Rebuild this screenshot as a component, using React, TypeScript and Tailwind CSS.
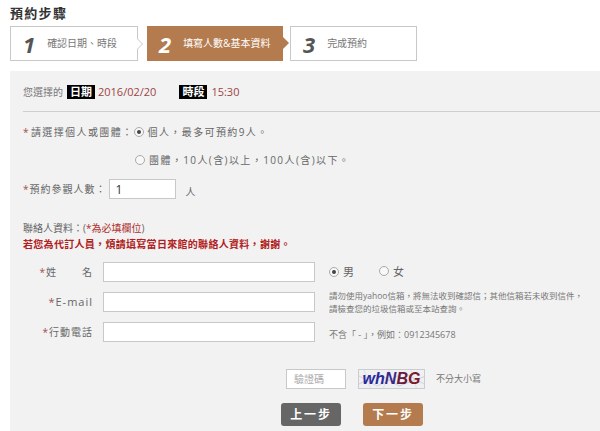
import { Fragment } from 'react'

const font = { fontFamily: '"Open Sans", "Noto Sans CJK TC", sans-serif' }

function Step({ n, label, active, arrow }: { n: string; label: string; active?: boolean; arrow?: boolean }) {
  return (
    <div
      className={`relative flex items-center h-[35px] pl-[12px] ${active ? 'bg-[#b47b4e] text-white' : 'bg-white border border-[#c8c8c8] text-[#666]'}`}
    >
      <span className={`text-[22px] font-bold italic leading-none ${active ? 'text-white' : 'text-[#555]'}`}>{n}</span>
      <span className={`ml-[12px] text-[10px] ${active ? 'text-white' : 'text-[#777]'}`}>{label}</span>
      {arrow && (
        <span
          className={`absolute right-[-6px] top-[11px] w-0 h-0 border-y-[6px] border-y-transparent border-l-[6px] ${active ? 'border-l-[#b47b4e]' : 'border-l-[#c8c8c8]'}`}
        />
      )}
      {arrow && !active && (
        <span className="absolute right-[-5px] top-[12px] w-0 h-0 border-y-[5px] border-y-transparent border-l-[5px] border-l-white" />
      )}
    </div>
  )
}

function Radio({ checked }: { checked?: boolean }) {
  return (
    <span className="inline-flex items-center justify-center w-[10px] h-[10px] rounded-full border border-[#aaa] bg-[#f8f8f8]">
      {checked && <span className="w-[4px] h-[4px] rounded-full bg-[#444]" />}
    </span>
  )
}

export default function App() {
  return (
    <div className="w-[600px] h-[431px] bg-white overflow-hidden text-[#666]" style={font}>
      <div className="pl-[10px] pt-[5px]">
        <h1 className="text-[13px] font-bold text-[#333] tracking-[0.1em] leading-[16px]">預約步驟</h1>
        <div className="flex mt-[5px] gap-0">
          <div className="w-[128px]">
            <Step n="1" label="確認日期、時段" arrow />
          </div>
          <div className="w-[136px] ml-[9px]">
            <Step n="2" label="填寫人數&基本資料" active arrow />
          </div>
          <div className="w-[127px] ml-[7px]">
            <Step n="3" label="完成預約" />
          </div>
        </div>
      </div>

      <div className="ml-[10px] mt-[10px] bg-[#f2f2f2] h-[400px] pl-[13px]">
        <div className="flex items-center h-[40px] text-[10px] pt-[2px]">
          <span className="text-[#777]">您選擇的</span>
          <span className="ml-[4px] bg-black text-white font-bold px-[3px] leading-[14px] text-[11px]">日期</span>
          <span className="ml-[3px] text-[#9c4444] text-[11px]">2016/02/20</span>
          <span className="ml-[23px] bg-black text-white font-bold px-[3px] leading-[14px] text-[11px]">時段</span>
          <span className="ml-[4px] text-[#9c4444] text-[11px]">15:30</span>
        </div>
        <div className="border-t border-[#cfcfcf]" />

        <div className="flex items-center mt-[12px] text-[10px] tracking-[1.4px] h-[16px]">
          <span className="text-[#a05050] mr-[1px]">*</span>
          <span>請選擇個人或團體：</span>
          <Radio checked />
          <span className="ml-[4px]">個人，最多可預約9人。</span>
        </div>
        <div className="flex items-center mt-[12px] ml-[112px] text-[10px] tracking-[1.4px] h-[16px]">
          <Radio />
          <span className="ml-[4px]">團體，10人(含)以上，100人(含)以下。</span>
        </div>

        <div className="flex items-center mt-[11px] text-[10px] h-[20px]">
          <span className="text-[#a05050] mr-[1px]">*</span>
          <span className="tracking-[1px]">預約參觀人數：</span>
          <input
            readOnly
            value="1"
            className="ml-[2px] w-[67px] h-[20px] bg-white border border-[#c8c8c8] px-[6px] text-[12px] text-[#333] outline-none"
          />
          <span className="ml-[10px] mt-[6px]">人</span>
        </div>

        <div className="mt-[21px] text-[10px] leading-[16px]">
          <div>
            聯絡人資料：(<span className="text-[#b03030]">*為必填欄位</span>)
          </div>
          <div className="text-[#b02020] font-bold tracking-[0.3px]">若您為代訂人員，煩請填寫當日來館的聯絡人資料，謝謝。</div>
        </div>

        <div className="grid grid-cols-[80px_auto_1fr] items-center gap-y-[10px] mt-[10px] text-[10px]">
          <div className="text-right pr-[10px] tracking-[1px] flex justify-end">
            <span className="text-[#a05050]">*</span>
            <span className="w-[47px] flex justify-between"><span>姓</span><span>名</span></span>
          </div>
          <input readOnly className="w-[212px] h-[20px] bg-white border border-[#c8c8c8] outline-none" />
          <div className="flex items-center ml-[14px] text-[11px]">
            <Radio checked />
            <span className="ml-[4px]">男</span>
            <span className="ml-[25px]"><Radio /></span>
            <span className="ml-[4px]">女</span>
          </div>

          <Fragment>
            <div className="text-right pr-[10px] tracking-[1px] text-[11px]">
              <span className="text-[#a05050]">*</span>E-mail
            </div>
            <input readOnly className="w-[212px] h-[20px] bg-white border border-[#c8c8c8] outline-none" />
            <div className="ml-[14px] h-[20px] flex flex-col justify-center text-[8.5px] leading-[13px] text-[#777]">
              <div>請勿使用yahoo信箱，將無法收到確認信；其他信箱若未收到信件，</div>
              <div>請檢查您的垃圾信箱或至本站查詢。</div>
            </div>
          </Fragment>

          <div className="text-right pr-[10px] tracking-[1px]">
            <span className="text-[#a05050]">*</span>行動電話
          </div>
          <input readOnly className="w-[212px] h-[20px] bg-white border border-[#c8c8c8] outline-none" />
          <div className="ml-[14px] self-end leading-[14px] text-[9px] text-[#777]">不含「 - 」，例如：0912345678</div>
        </div>

        <div className="flex items-center mt-[26px] ml-[263px] h-[21px]">
          <input
            readOnly
            placeholder="驗證碼"
            className="w-[60px] h-[20px] bg-white border border-[#c8c8c8] outline-none px-[7px] text-[10px] placeholder:text-[#aaa]"
          />
          <div className="ml-[12px] w-[67px] h-[20px] border border-[#ccc] bg-[#eef0f4] relative overflow-hidden flex items-center justify-center">
            <svg className="absolute inset-0" width="67" height="20" viewBox="0 0 67 20">
              <path d="M0 14 L20 4 L40 16 L67 6" stroke="#b8b8c8" strokeWidth="0.6" fill="none" />
              <path d="M0 6 L18 16 L45 3 L67 15" stroke="#c0c0cc" strokeWidth="0.6" fill="none" />
              <path d="M5 0 L12 20 M30 0 L24 20 M52 0 L58 20" stroke="#d0d0d8" strokeWidth="0.5" />
            </svg>
            <span
              className="relative text-[16px] font-bold italic leading-none"
              style={{ fontFamily: '"Liberation Sans", Arial, sans-serif' }}
            >
              <span className="text-[#2a2a9a]">wh</span>
              <span className="text-[#3b2a8a]">N</span>
              <span className="text-[#6a1a3a]">B</span>
              <span className="text-[#7a1a2a]">G</span>
            </span>
          </div>
          <span className="ml-[11px] text-[9px] text-[#777]">不分大小寫</span>
        </div>

        <div className="flex mt-[14px] ml-[258px] gap-[22px]">
          <button className="w-[60px] h-[23px] rounded-[3px] bg-[#666] text-white text-[12px] font-bold tracking-[0.15em]">上一步</button>
          <button className="w-[60px] h-[23px] rounded-[3px] bg-[#b47b4e] text-white text-[12px] font-bold tracking-[0.15em]">下一步</button>
        </div>
      </div>
    </div>
  )
}
